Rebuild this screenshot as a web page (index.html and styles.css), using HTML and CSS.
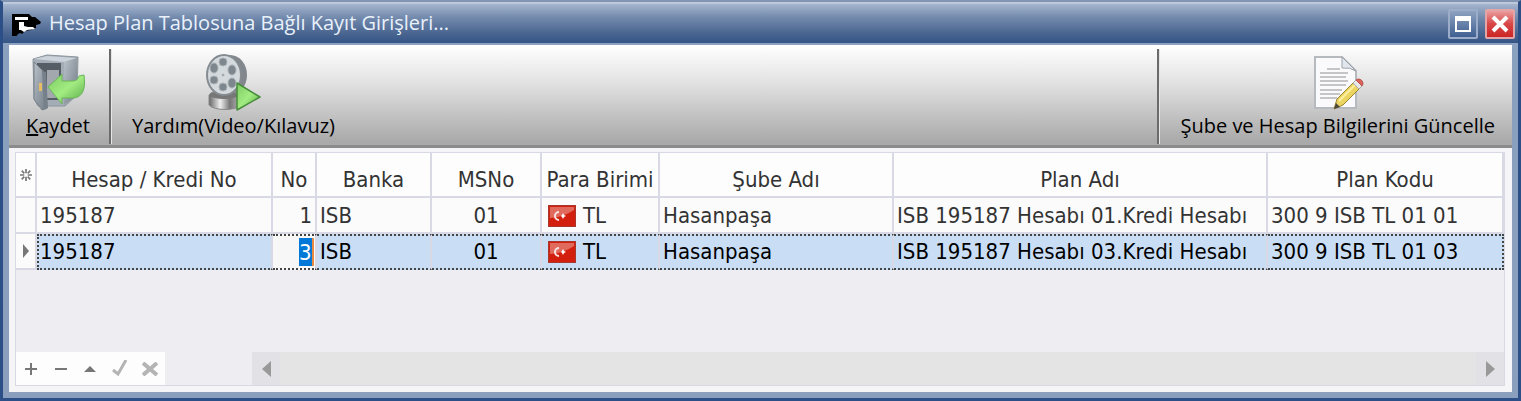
FILE: index.html
```html
<!DOCTYPE html>
<html lang="tr">
<head>
    <meta charset="UTF-8">
    <meta name="viewport" content="width=device-width, initial-scale=1.0">
    <title>Hesap Plan Tablosuna Bağlı Kayıt Girişleri...</title>
    <link rel="stylesheet" href="styles.css">
</head>
<body>
    <div class="window">
        <header class="titlebar">
            <svg class="app-icon" width="30" height="24" viewBox="0 0 30 24">
                <path d="M0 2h17l3 3h3l6 5-1 2-4 1v3l-5 2-6 1-3 3-2-1-2 1H6l-2 3H0z" fill="#000"/>
                <path d="M3 5h13v3H3zM7 10h5v4l4 1h5l2 2-8 1-3 2-3-2H7z" fill="#fff"/>
            </svg>
            <h1>Hesap Plan Tablosuna Bağlı Kayıt Girişleri...</h1>
            <button type="button" class="win-btn" aria-label="Ekranı kapla">
                <svg width="16" height="16" viewBox="0 0 16 16"><path d="M1 1h14v14H1z" fill="none" stroke="#fff" stroke-width="2"/><path d="M1 1h14v4H1z" fill="#fff"/></svg>
            </button>
            <button type="button" class="win-btn close" aria-label="Kapat">
                <svg width="18" height="18" viewBox="0 0 18 18"><path d="M2 2l14 14M16 2L2 16" stroke="#fff" stroke-width="4"/></svg>
            </button>
        </header>

        <main>
            <div class="toolbar">
                <button type="button" class="tool">
                    <svg width="56" height="58" viewBox="0 0 56 58">
                        <defs>
                            <linearGradient id="steel" x1="0" y1="0" x2="1" y2="1">
                                <stop offset="0" stop-color="#b9c1c9"/><stop offset="1" stop-color="#717b84"/>
                            </linearGradient>
                            <linearGradient id="green" x1="0" y1="0" x2="1" y2="1">
                                <stop offset="0" stop-color="#7ccb62"/><stop offset=".5" stop-color="#a2ec82"/><stop offset="1" stop-color="#56a844"/>
                            </linearGradient>
                        </defs>
                        <path d="M3 6l14-4 31 2-1 38-12 11H8L4 46z" fill="#a4adb6" stroke="#8b949c"/>
                        <path d="M4 6l13-3 30 2-13 4z" fill="#ccd3da"/>
                        <path d="M34 9l13-4v37l-13 10z" fill="url(#steel)"/>
                        <path d="M7 10h24v37H10z" fill="#565d65"/>
                        <path d="M17 17h12v28H17z" fill="#a2a8ae"/>
                        <path d="M4 9l9 9 4 37-5 2-8-11z" fill="url(#steel)" stroke="#78828b"/>
                        <path d="M12 18l4 1 2 36-4 2z" fill="#76808a"/>
                        <path d="M9 30h3v8H9z" fill="#e5bd65"/>
                        <path d="M18 34l14-13v7h10c6 0 6-3 7-5l5-1c2 13-1 22-10 23H32v6z" fill="url(#green)" stroke="#6bb55a" stroke-linejoin="round"/>
                    </svg>
                    <span><u>K</u>aydet</span>
                </button>
                <span class="divider"></span>
                <button type="button" class="tool">
                    <svg width="56" height="58" viewBox="0 0 56 58">
                        <defs>
                            <linearGradient id="chrome">
                                <stop offset="0" stop-color="#666"/><stop offset=".35" stop-color="#eee"/><stop offset=".65" stop-color="#777"/><stop offset="1" stop-color="#bbb"/>
                            </linearGradient>
                        </defs>
                        <ellipse cx="25" cy="22" rx="17" ry="20" fill="#81878c"/>
                        <path d="M4 42c4-7 28-7 32 0v10c-5 6-27 6-32 0z" fill="url(#chrome)" stroke="#888"/>
                        <ellipse cx="19" cy="42" rx="14" ry="4" fill="#777"/>
                        <ellipse cx="19" cy="22" rx="17" ry="20" fill="#d3d9dd" stroke="#858c91" stroke-width="2"/>
                        <g fill="#7e878d" stroke="#aab1b5">
                            <ellipse cx="18" cy="9" rx="4" ry="4"/>
                            <ellipse cx="27" cy="17" rx="4" ry="5"/>
                            <ellipse cx="27" cy="30" rx="4" ry="5"/>
                            <ellipse cx="18" cy="34" rx="4" ry="4"/>
                            <ellipse cx="9" cy="27" rx="4" ry="4"/>
                            <ellipse cx="9" cy="15" rx="4" ry="5"/>
                            <ellipse cx="18" cy="22" rx="1" ry="1"/>
                        </g>
                        <path d="M32 30l23 14-23 13z" fill="url(#green)" stroke="#468c3a" stroke-width="1.5" stroke-linejoin="round"/>
                    </svg>
                    <span>Yardım(Video/Kılavuz)</span>
                </button>
                <span class="divider push"></span>
                <button type="button" class="tool">
                    <svg width="56" height="58" viewBox="0 0 56 58">
                        <path d="M5 4h27l14 14v37H5z" fill="#fafafc" stroke="#b6babf" stroke-width="2"/>
                        <path d="M32 4l14 14q-6-4-14-3z" fill="#e1e7ee" stroke="#9ca2a8"/>
                        <path d="M17 16h13M10 20h28M10 24h26M10 28h28M10 32h26M10 37h22M10 41h20M10 45h17" stroke="#b4b4b4" stroke-width="1.5"/>
                        <path d="M24 56l3-10 17-17 6 6-17 17z" fill="#ecd461" stroke="#9b832f"/>
                        <path d="M29 48l17-17" stroke="#fff0a0" stroke-width="2"/>
                        <path d="M24 56l2-6 4 4z" fill="#4d483d"/>
                        <path d="M43 30l3-3 6 6-3 3z" fill="#e8e8e8" stroke="#aaa"/>
                        <path d="M46 27c4-3 9 2 6 6z" fill="#d9645a" stroke="#b84f48"/>
                    </svg>
                    <span>Şube ve Hesap Bilgilerini Güncelle</span>
                </button>
            </div>

            <div class="grid">
                <table>
                    <colgroup>
                        <col class="c-mark"><col class="c-account"><col class="c-no"><col class="c-bank"><col class="c-ms"><col class="c-currency"><col class="c-branch"><col class="c-plan"><col>
                    </colgroup>
                    <thead>
                        <tr>
                            <th class="mark">
                                <svg width="12" height="14" viewBox="0 0 14 14"><path d="M7 0v5M7 9v5M0 7h5M9 7h5M2 2l3 3M9 9l3 3M12 2L9 5M5 9l-3 3" stroke="#777" stroke-width="2"/></svg>
                            </th>
                            <th>Hesap / Kredi No</th>
                            <th>No</th>
                            <th>Banka</th>
                            <th>MSNo</th>
                            <th>Para Birimi</th>
                            <th>Şube Adı</th>
                            <th>Plan Adı</th>
                            <th>Plan Kodu</th>
                        </tr>
                    </thead>
                    <tbody>
                        <tr>
                            <td class="mark"></td>
                            <td>195187</td>
                            <td class="num">1</td>
                            <td>ISB</td>
                            <td class="mid">01</td>
                            <td><span class="currency"><svg width="28" height="22" viewBox="0 0 28 22"><path d="M0 0h28v22H0z" fill="#a8382d"/><path d="M1 1h26v20H1z" fill="#d3200e"/><path d="M2 2h24v3Q16 12 2 13z" fill="#e06a5c"/><path d="M11 7a4 4 0 1 0 0 8" fill="none" stroke="#f8e3e1" stroke-width="2"/><path d="M15 8l1 2 2 1-2 1-1 2-1-2-1-1 1-1z" fill="#fff"/></svg>TL</span></td>
                            <td>Hasanpaşa</td>
                            <td>ISB 195187 Hesabı 01.Kredi Hesabı</td>
                            <td>300 9 ISB TL 01 01</td>
                        </tr>
                        <tr class="selected">
                            <td class="mark"><svg width="8" height="14" viewBox="0 0 8 14"><path d="M1 0l6 7-6 7z" fill="#777"/></svg></td>
                            <td>195187</td>
                            <td class="num editing"><input type="text" value="3" aria-label="No"></td>
                            <td>ISB</td>
                            <td class="mid">01</td>
                            <td><span class="currency"><svg width="28" height="22" viewBox="0 0 28 22"><path d="M0 0h28v22H0z" fill="#a8382d"/><path d="M1 1h26v20H1z" fill="#d3200e"/><path d="M2 2h24v3Q16 12 2 13z" fill="#e06a5c"/><path d="M11 7a4 4 0 1 0 0 8" fill="none" stroke="#f8e3e1" stroke-width="2"/><path d="M15 8l1 2 2 1-2 1-1 2-1-2-1-1 1-1z" fill="#fff"/></svg>TL</span></td>
                            <td>Hasanpaşa</td>
                            <td>ISB 195187 Hesabı 03.Kredi Hesabı</td>
                            <td>300 9 ISB TL 01 03</td>
                        </tr>
                    </tbody>
                </table>

                <div class="grid-footer">
                    <div class="navigator">
                        <button type="button" aria-label="Ekle"><svg width="14" height="14" viewBox="0 0 14 14"><path d="M7 1v12M1 7h12" stroke="#777" stroke-width="2"/></svg></button>
                        <button type="button" aria-label="Sil"><svg width="14" height="14" viewBox="0 0 14 14"><path d="M1 7h12" stroke="#777" stroke-width="2"/></svg></button>
                        <button type="button" aria-label="Düzenle"><svg width="14" height="14" viewBox="0 0 14 14"><path d="M1 10l6-6 6 6z" fill="#777"/></svg></button>
                        <button type="button" aria-label="Onayla"><svg width="16" height="18" viewBox="0 0 16 18"><path d="M1 10l5 4 8-14" fill="none" stroke="#b4b4b4" stroke-width="3"/></svg></button>
                        <button type="button" aria-label="İptal"><svg width="16" height="14" viewBox="0 0 16 14"><path d="M1 1l14 12M15 1L1 13" stroke="#b4b4b4" stroke-width="4"/></svg></button>
                    </div>
                    <div class="scrollbar">
                        <button type="button" aria-label="Sola kaydır"><svg width="9" height="16" viewBox="0 0 9 16"><path d="M9 0v16L0 8z" fill="#999"/></svg></button>
                        <div class="track"></div>
                        <button type="button" aria-label="Sağa kaydır"><svg width="9" height="16" viewBox="0 0 9 16"><path d="M0 0v16l9-8z" fill="#999"/></svg></button>
                    </div>
                </div>
            </div>
        </main>
    </div>
</body>
</html>
```

FILE: styles.css
```css
* {
    box-sizing: border-box;
}
body {
    margin: 0;
    font-family: "Open Sans", "Noto Sans", sans-serif;
}
button {
    border: none;
    background: none;
    padding: 0;
    font: inherit;
    color: inherit;
}
svg {
    display: block;
}

/* window frame */
.window {
    display: flex;
    flex-direction: column;
    min-height: 100vh;
    padding: 0 6px 6px;
    background: linear-gradient(#a0b1ca, #89a0be 50px, #8a9fbd);
    border: 2px solid #2c4f87;
    border-top-color: #8296b4;
    border-left-width: 3px;
    border-right-width: 3px;
    border-bottom-width: 3px;
}
.titlebar {
    display: flex;
    align-items: center;
    height: 43px;
    margin: 0 -6px;
    padding: 0 3px 0 9px;
    background: linear-gradient(#a5b5ce, #7189ac 14px, #48648f 30px, #335486 40px);
    border-top: 2px solid #bdc9da;
    border-bottom: 2px solid #8da2c0;
    color: #e9f1fb;
}
.titlebar h1 {
    flex: 1;
    margin: 0 0 2px 7px;
    font-size: 20px;
    line-height: 24px;
    font-weight: normal;
}
.win-btn {
    display: flex;
    align-items: center;
    justify-content: center;
    width: 30px;
    height: 30px;
    margin-left: 7px;
    border: 2px solid #9badc8;
    border-radius: 2px;
    background: linear-gradient(#8ea2c0, #3f6092);
}
.win-btn.close {
    border-color: #e3a5a8;
    background: linear-gradient(#eb9d9d, #d84646 50%, #cc2525);
}

main {
    flex: 1;
    display: flex;
    flex-direction: column;
    background: #f5f5f7;
}

/* toolbar */
.toolbar {
    display: flex;
    height: 103px;
    padding-top: 4px;
    background: linear-gradient(#fff, #e4e4e4 35px, #aaa 96px);
    border-bottom: 3px solid #8b8b8b;
}
.tool {
    display: flex;
    flex-direction: column;
    align-items: center;
    padding: 4px 17px 0;
    font-size: 20px;
    line-height: 30px;
    white-space: nowrap;
}
.divider {
    width: 3px;
    height: 95px;
    margin: 0 3px 0 2px;
    background: #6b6b6b;
    border-right: 1px solid #e6e6e6;
}
.push {
    margin-left: auto;
}

/* records grid */
.grid {
    flex: 1;
    display: flex;
    flex-direction: column;
    margin: 4px 7px 6px 6px;
    background: #eeedf2;
    border: 1px solid #d9d9e5;
    font-family: "DejaVu Sans Condensed", "Noto Sans", sans-serif;
    color: #333;
}
table {
    width: 100%;
    table-layout: fixed;
    border-collapse: separate;
    border-spacing: 0;
}
th, td {
    height: 36px;
    padding: 1px 3px 0;
    border-right: 2px solid #d9d9e5;
    border-bottom: 2px solid #d9d9e5;
    background: #fbfbfb;
    font-size: 22px;
    line-height: 26px;
    font-weight: normal;
    text-align: left;
    white-space: nowrap;
}
th {
    height: 45px;
    padding: 10px 0 0;
    background: #fdfdfd;
    text-align: center;
}
.mark {
    padding: 0 0 0 4px;
}
.c-mark { width: 21px; }
.c-account { width: 236px; }
.c-no { width: 44px; }
.c-bank { width: 115px; }
.c-ms { width: 110px; }
.c-currency { width: 118px; }
.c-branch { width: 234px; }
.c-plan { width: 374px; }
.num {
    text-align: right;
}
.mid {
    text-align: center;
}
.currency {
    display: flex;
    align-items: center;
    gap: 7px;
    padding-left: 3px;
}
.selected td {
    padding-top: 0;
    background: #c9def5;
    border-top: 2px dotted #444;
    border-bottom: 2px dotted #444;
    color: #000;
}
.selected .mark {
    padding-left: 6px;
    background: #fbfbfb;
    border-top: none;
    border-bottom: 2px solid #d9d9e5;
}
.selected td:nth-child(2) {
    border-left: 2px dotted #444;
    padding-left: 1px;
}
.selected td:last-child {
    border-right: 2px dotted #444;
}
.selected .editing {
    background: #f7f7f7;
    padding: 0 1px;
}
.editing input {
    display: block;
    width: 15px;
    height: 28px;
    margin-left: auto;
    padding: 0;
    border: none;
    border-right: 2px solid #e98a42;
    background: #0078d7;
    color: #fff;
    font: inherit;
}

/* navigator and scrollbar */
.grid-footer {
    display: flex;
    justify-content: space-between;
    height: 33px;
    margin-top: auto;
}
.navigator {
    display: flex;
    width: 149px;
    background: #fdfdfd;
}
.navigator button {
    flex: 1;
    display: flex;
    align-items: center;
    justify-content: center;
}
.scrollbar {
    display: flex;
    flex: 1;
    margin-left: 87px;
    background: #e2e1e6;
}
.scrollbar button {
    width: 28px;
    display: flex;
    align-items: center;
    justify-content: center;
}
.track {
    flex: 1;
    background: #e4e4e4;
}
```
